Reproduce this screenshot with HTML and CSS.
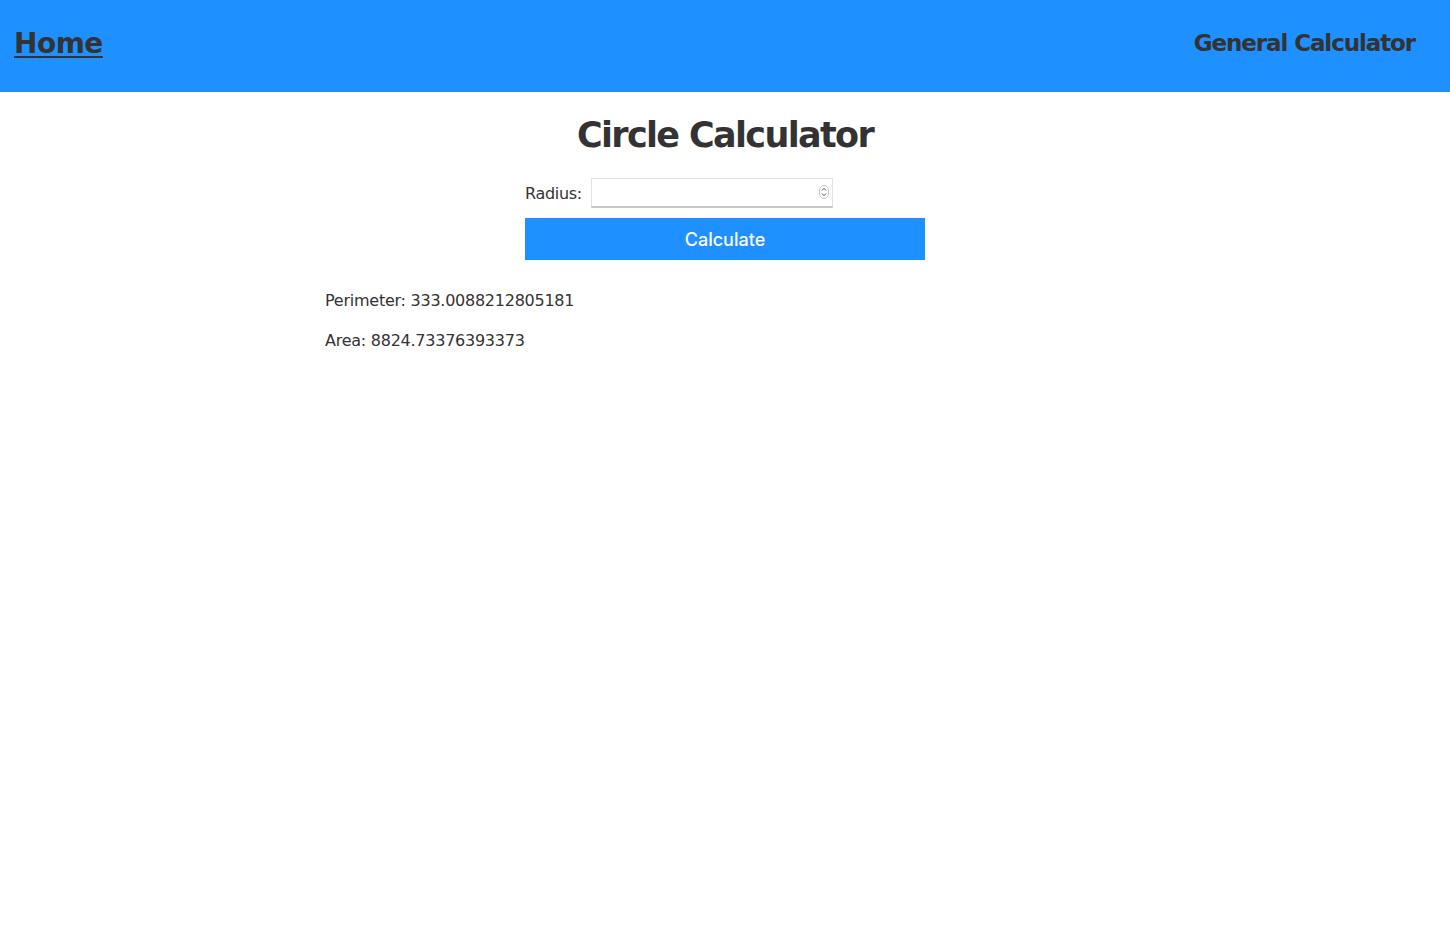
FILE: index.html
```html
<!DOCTYPE html>
<html>
<head>
<meta charset="utf-8">
<link rel="stylesheet" href="styles.css">
</head>
<body>
<header class="topbar">
  <a class="home" href="#">Home</a>
  <span class="brand">General Calculator</span>
</header>
<main class="content">
  <h1 class="title">Circle Calculator</h1>
  <form class="form">
    <div class="row">
      <label class="label" for="r">Radius:</label>
      <span class="field">
        <input id="r" class="input" type="text">
        <span class="spin">
          <svg width="10" height="14" viewBox="0 0 10 14"><rect x="0.5" y="0.5" width="9" height="13" rx="4.5" fill="#fff" stroke="#c8c8c8"/><path d="M3 5.4 L5 3.4 L7 5.4" fill="none" stroke="#444" stroke-width="1"/><path d="M3 8.6 L5 10.6 L7 8.6" fill="none" stroke="#444" stroke-width="1"/></svg>
        </span>
      </span>
    </div>
    <button type="button" class="btn">Calculate</button>
  </form>
  <div class="results">
    <p class="res">Perimeter: 333.0088212805181</p>
    <p class="res">Area: 8824.73376393373</p>
  </div>
</main>
</body>
</html>
```
FILE: styles.css
```css
html, body {
  margin: 0;
  padding: 0;
  background: #fff;
  color: #333;
  font-family: Tahoma, "DejaVu Sans", Verdana, sans-serif;
}
.topbar {
  height: 92px;
  background: #1e90ff;
  display: flex;
  align-items: center;
  justify-content: space-between;
  padding: 0 35px 0 14px;
}
.home {
  color: #333;
  font-weight: bold;
  font-size: 28px;
  text-decoration: underline;
  text-decoration-thickness: 2px;
  text-underline-offset: 3px;
  letter-spacing: -0.5px;
  margin-top: -5px;
}
.brand {
  font-weight: bold;
  font-size: 23px;
  letter-spacing: -1.1px;
  margin-top: -7px;
}
.content {
  width: 800px;
  margin: 0 auto;
}
.title {
  margin: 20px 0 0;
  text-align: center;
  font-size: 35px;
  line-height: 46px;
  letter-spacing: -1.65px;
}
.form {
  width: 400px;
  margin: 20px auto 0;
  display: flex;
  flex-direction: column;
  gap: 10px;
}
.row {
  display: flex;
  align-items: center;
  gap: 9px;
}
.label {
  font-size: 16px;
  letter-spacing: -0.3px;
}
.field {
  position: relative;
  display: inline-block;
}
.input {
  box-sizing: border-box;
  width: 242px;
  height: 30px;
  border: 1px solid #e2e2e2;
  border-bottom: 2px solid #c6c6c6;
  background: #fff;
  padding: 0 4px;
  font-size: 16px;
  outline: none;
  display: block;
}
.spin {
  position: absolute;
  right: 4px;
  top: 7px;
  line-height: 0;
}
.btn {
  height: 42px;
  width: 400px;
  border: none;
  background: #1e90ff;
  color: #fff;
  font-family: Inter, "Liberation Sans", sans-serif;
  font-size: 18px;
  font-weight: 500;
  cursor: pointer;
}
.results {
  margin-top: 31px;
}
.res {
  margin: 0 0 20px;
  font-size: 16px;
  line-height: 20px;
  letter-spacing: -0.25px;
}
```
